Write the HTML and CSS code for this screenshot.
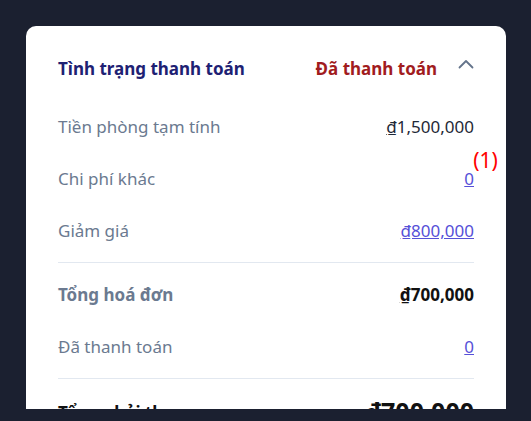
FILE: index.html
```html
<!DOCTYPE html>
<html lang="vi">
  <head>
    <meta charset="UTF-8" />
    <meta name="viewport" content="width=device-width, initial-scale=1.0" />
    <title>Tình trạng thanh toán</title>
    <link rel="stylesheet" href="styles.css">
  </head>
  <body>
    <main class="viewport">
      <section class="payment-card">
        <header class="payment-header">
          <h2 class="payment-title">Tình trạng thanh toán</h2>
          <span class="payment-status">Đã thanh toán</span>
          <svg class="chevron" width="16" height="10" viewBox="0 0 16 10" fill="none">
            <path d="M1.5 8.5 L8 2 L14.5 8.5" stroke="#64748b" stroke-width="1.8" stroke-linecap="round" stroke-linejoin="round" />
          </svg>
        </header>

        <div class="row">
          <span class="label">Tiền phòng tạm tính</span>
          <span class="value"><u>₫</u>1,500,000</span>
        </div>
        <div class="row">
          <span class="label">Chi phí khác</span>
          <a class="value link has-note" href="#">0<span class="note">(1)</span></a>
        </div>
        <div class="row">
          <span class="label">Giảm giá</span>
          <a class="value link" href="#">₫800,000</a>
        </div>

        <hr class="divider" />

        <div class="row">
          <span class="label strong">Tổng hoá đơn</span>
          <span class="value strong dark"><u>₫</u>700,000</span>
        </div>
        <div class="row">
          <span class="label">Đã thanh toán</span>
          <a class="value link" href="#">0</a>
        </div>

        <hr class="divider" />

        <div class="row">
          <span class="label strong dark">Tổng phải thu</span>
          <span class="value strong dark big"><u>₫</u>700,000</span>
        </div>
      </section>
    </main>
  </body>
</html>
```

FILE: styles.css
```css
/* General Reset */
* {
  margin: 0;
  padding: 0;
  box-sizing: border-box;
  font-family: "Noto Sans", "Open Sans", sans-serif;
}

body {
  background-color: #1b2030;
}

/* Scroll area: the card is cut off at its bottom */
.viewport {
  height: 409px;
  overflow: hidden;
  padding: 26px 25px 0 26px;
}

.payment-card {
  background-color: #ffffff;
  border-radius: 10px;
  padding: 0 32px 40px;
}

/* Header */
.payment-header {
  display: flex;
  align-items: center;
  padding: 33px 0 22px;
  line-height: 20px;
}

.payment-title {
  flex-grow: 1;
  font-size: 17px;
  font-weight: 700;
  color: #1e2173;
}

.payment-status {
  font-size: 17px;
  font-weight: 700;
  color: #a11c1e;
}

.chevron {
  margin-left: 21px;
  margin-top: -10px;
}

/* Rows */
.row {
  display: flex;
  justify-content: space-between;
  align-items: center;
  padding: 16px 0;
  line-height: 20px;
  font-size: 17px;
}

.label {
  color: #6b7a90;
}

.value {
  color: #1f2937;
}

.link {
  color: #5650d8;
  text-decoration: underline;
}

.has-note {
  position: relative;
}

.note {
  position: absolute;
  left: 9px;
  bottom: 16px;
  font-size: 21px;
  line-height: 26px;
  color: #ff0000;
  text-decoration: none;
  display: inline-block;
}

.strong {
  font-weight: 700;
}

.dark {
  color: #111111;
}

.big {
  font-size: 25px;
  line-height: 28px;
  margin-top: -4px;
}

.divider {
  border: none;
  border-top: 1px solid #e2e8f0;
  margin: 5px 0 6px;
}
```
